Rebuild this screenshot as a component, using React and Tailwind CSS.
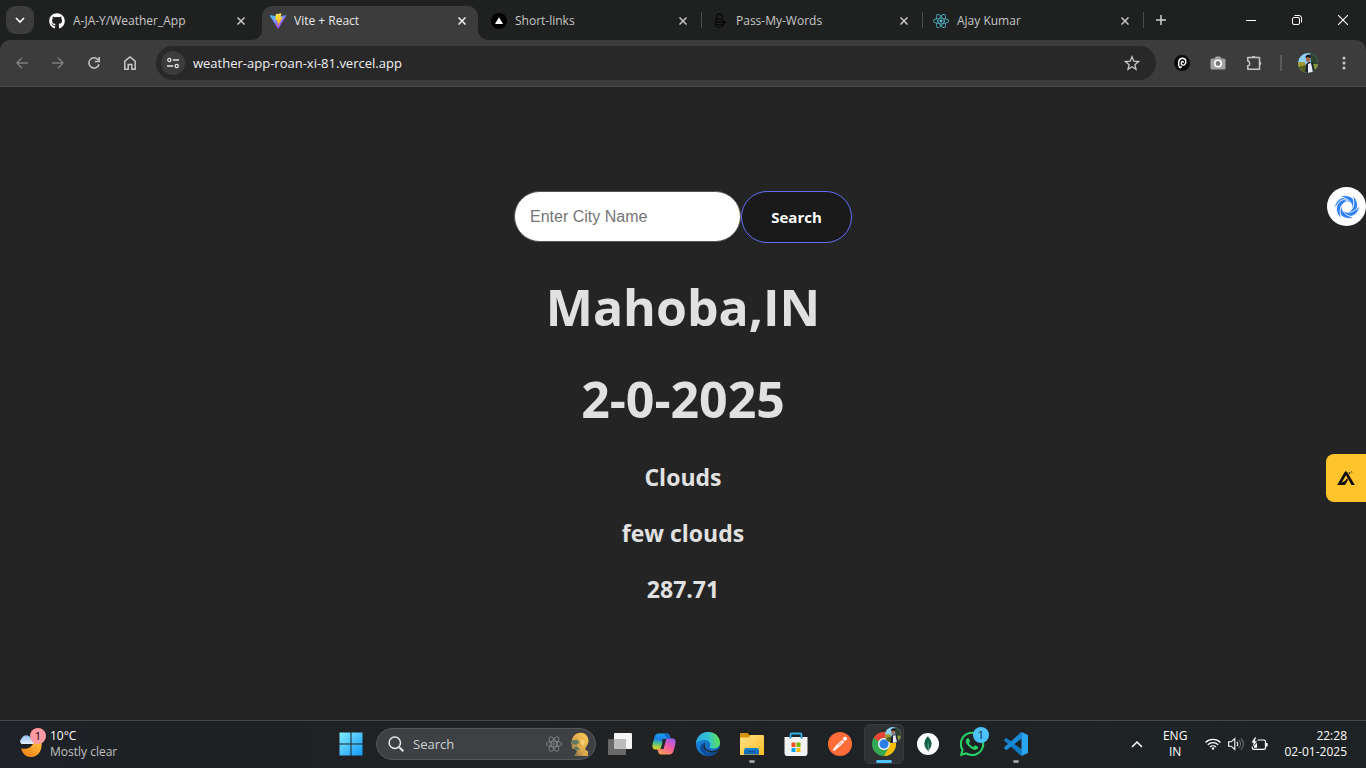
import React from "react";
import { FaGithub, FaWhatsapp, FaReact } from "react-icons/fa";
import { SiMongodb } from "react-icons/si";

function Vite() {
  return (
    <svg viewBox="0 0 32 32" className="size-4">
      <defs>
        <linearGradient id="viteA" x1="0" y1="0" x2=".7" y2="1">
          <stop offset="0" stopColor="#41d1ff" />
          <stop offset="1" stopColor="#bd34fe" />
        </linearGradient>
        <linearGradient id="viteB" x1=".4" y1="0" x2=".6" y2="1">
          <stop offset="0" stopColor="#ffea83" />
          <stop offset=".2" stopColor="#ffdd35" />
          <stop offset="1" stopColor="#ffa800" />
        </linearGradient>
      </defs>
      <path fill="url(#viteA)" d="M31.9 5.8 17 31.1c-.3.6-1.200.6-1.500 0L.1 5.800C-.3 5.100.3 4.300 1.100 4.400L16 7.100 30.900 4.400c.8-.1 1.400.7 1 1.400Z" />
      <path fill="url(#viteB)" d="M22.500.6 11.800 2.700c-.2 0-.3.2-.3.4L10.800 14c0 .3.2.5.5.4l3-.7c.3-.1.500.2.500.5l-.9 4.300c-.1.300.2.500.5.4l1.900-.6c.3-.1.600.2.500.5l-1.400 6.800c-.1.4.5.7.7.3l.2-.2 8.700-17.400c.1-.2-.1-.6-.5-.5l-3.100.6c-.3.100-.5-.2-.5-.5l2-6.900c.1-.300-.1-.500-.4-.4Z" />
    </svg>
  );
}

function VercelMark() {
  return (
    <svg viewBox="0 0 16 16" className="size-4">
      <circle cx="8" cy="8" r="8" fill="#000" />
      <path d="M8 4.200 12 11H4Z" fill="#fff" />
    </svg>
  );
}

function LockMark() {
  return (
    <svg viewBox="0 0 16 16" className="size-4" fill="none" stroke="#080808" strokeWidth="1.300">
      <path d="M4.500 6V4a3 3 0 0 1 6 0v2" />
      <circle cx="7.500" cy="10" r="4.300" />
      <path d="M4 9h9M5 11.500h6M11.500 7.500l2 1.800-2 1.800" />
    </svg>
  );
}

function Close({ label, bright }) {
  return (
    <button type="button" aria-label={label} className={bright ? "grid size-4 place-items-center text-[#f0f0f0]" : "grid size-4 place-items-center text-[#c7c7c7]"}>
      <svg viewBox="0 0 8 8" className="size-2" stroke="currentColor" strokeWidth="1.500">
        <path d="M.5.5l7 7M7.500.500l-7 7" />
      </svg>
    </button>
  );
}

const tabs = [
  { title: "A-JA-Y/Weather_App", icon: <FaGithub className="size-4 text-white" /> },
  { title: "Vite + React", icon: <Vite />, active: true },
  { title: "Short-links", icon: <VercelMark />, sep: true },
  { title: "Pass-My-Words", icon: <LockMark />, sep: true },
  { title: "Ajay Kumar", icon: <FaReact className="size-4 text-[#58c4dc]" />, sep: true },
];

function Tab({ tab }) {
  return (
    <div className="flex h-full w-[221px] min-w-0 shrink items-end">
      <div className={tab.active ? "relative flex h-[34px] min-w-0 flex-1 items-center rounded-t-[10px] bg-[#3c3c3c] px-2 pb-1 text-[#e8e8e8]" : "flex h-[34px] min-w-0 flex-1 items-center px-2 pb-1 text-[#c7c7c7]"}>
        {tab.active && (
          <>
            <svg viewBox="0 0 10 10" className="absolute bottom-0 -left-2.5 size-2.5">
              <path d="M10 0v10H0A10 10 0 0 0 10 0Z" fill="#3c3c3c" />
            </svg>
            <svg viewBox="0 0 10 10" className="absolute -right-2.5 bottom-0 size-2.5">
              <path d="M0 0v10h10A10 10 0 0 1 0 0Z" fill="#3c3c3c" />
            </svg>
          </>
        )}
        <button type="button" className="flex min-w-0 flex-1 items-center gap-2 text-left">
          <span className="shrink-0">{tab.icon}</span>
          <span className="truncate text-xs leading-4">{tab.title}</span>
        </button>
        <Close label={"Close " + tab.title} bright={tab.active} />
      </div>
      <div className="flex h-[34px] w-[5px] justify-center pt-1.5">
        {tab.sep && <div className="h-4 w-px bg-[#4a4c4b]" />}
      </div>
    </div>
  );
}

function TabStrip() {
  return (
    <header className="flex h-10 items-start bg-[#1f2120]">
      <button type="button" aria-label="Search tabs" className="mt-1.5 mr-[7px] ml-1.5 grid size-7 shrink-0 place-items-center rounded-[9px] bg-[#3c3c3c] text-white">
        <svg viewBox="0 0 10 10" className="size-2.5" fill="none" stroke="currentColor" strokeWidth="1.700">
          <path d="M1 3l4 4 4-4" />
        </svg>
      </button>
      <nav className="flex h-full min-w-0">
        {tabs.map((t) => (
          <Tab key={t.title} tab={t} />
        ))}
      </nav>
      <button type="button" aria-label="New tab" className="mt-1.5 ml-px grid size-7 shrink-0 place-items-center text-[#d0d0d0]">
        <svg viewBox="0 0 10 10" className="size-2.5" stroke="currentColor" strokeWidth="1.500">
          <path d="M5 0v10M0 5h10" />
        </svg>
      </button>
      <div className="ml-auto flex h-10 text-white">
        <button type="button" aria-label="Minimize" className="grid w-[46px] place-items-center">
          <svg viewBox="0 0 10 10" className="size-2.5" stroke="currentColor"><path d="M0 5.500h10" /></svg>
        </button>
        <button type="button" aria-label="Restore" className="grid w-[46px] place-items-center">
          <svg viewBox="0 0 10 10" className="size-2.5" fill="none" stroke="currentColor">
            <rect x=".5" y="2.500" width="7" height="7" rx="1.500" />
            <path d="M2.500.500H7A2.500 2.500 0 0 1 9.500 3v4.500" />
          </svg>
        </button>
        <button type="button" aria-label="Close window" className="grid w-[46px] place-items-center">
          <svg viewBox="0 0 10 10" className="size-2.5" stroke="currentColor" strokeWidth="1.100"><path d="M0 0l10 10M10 0L0 10" /></svg>
        </button>
      </div>
    </header>
  );
}

function ToolButton({ label, children, dim }) {
  return (
    <button type="button" aria-label={label} className={dim ? "grid h-9 w-9 shrink-0 place-items-center text-[#7e7e7e]" : "grid h-9 w-9 shrink-0 place-items-center text-[#c7c7c7]"}>
      {children}
    </button>
  );
}

function Avatar({ className }) {
  return (
    <svg viewBox="0 0 20 20" className={className}>
      <defs><clipPath id="avatarClip"><circle cx="10" cy="10" r="10" /></clipPath></defs>
      <g clipPath="url(#avatarClip)">
        <rect width="20" height="20" fill="#8fd0f5" />
        <path d="M0 9l7 0 1 11H0Z" fill="#a39a31" />
        <path d="M0 14l8-2v8H0Z" fill="#54611e" />
        <path d="M12 0h8v20h-6Z" fill="#2c4430" />
        <path d="M15 11h5v5h-5Z" fill="#8a9238" />
        <path d="M7 20l1-9 3-2 4 1 2 10Z" fill="#1b2230" />
        <path d="M10 20v-9l3-1 2 9Z" fill="#e4e9f2" />
        <path d="M8 4c0-2 4-3 4.500 0l-.5 4-2 1.500L8 8Z" fill="#a0684e" />
        <path d="M7.500 5C7 1 13 0 13 4l-1 1-2-1Z" fill="#151515" />
      </g>
    </svg>
  );
}

function Toolbar() {
  return (
    <div className="bg-[#1f2120]">
      <div className="flex h-[47px] items-center rounded-t-[10px] border-b border-[#4b4b4b] bg-[#3c3c3c] px-1">
        <ToolButton label="Back" dim>
          <svg viewBox="0 0 12 12" className="size-3" fill="none" stroke="currentColor" strokeWidth="1.400"><path d="M12 6H1M6 .7.900 6 6 11.300" /></svg>
        </ToolButton>
        <ToolButton label="Forward" dim>
          <svg viewBox="0 0 12 12" className="size-3" fill="none" stroke="currentColor" strokeWidth="1.400"><path d="M0 6h11M6 .7 11.100 6 6 11.300" /></svg>
        </ToolButton>
        <ToolButton label="Reload">
          <svg viewBox="0 0 12 12" className="size-3" fill="none" stroke="currentColor" strokeWidth="1.500"><path d="M10.200 3A5.100 5.100 0 1 0 11 7.200M11.200 0v4.400H6.800" /></svg>
        </ToolButton>
        <ToolButton label="Home">
          <svg viewBox="0 0 12 14" className="h-3.5 w-3" fill="none" stroke="currentColor" strokeWidth="1.500"><path d="M.8 13.200V5.200L6 1l5.200 4.200v8H7.800V8.500H4.200v4.700Z" /></svg>
        </ToolButton>
        <div className="mx-2 flex h-[34px] min-w-0 flex-1 items-center rounded-full bg-[#282828] pr-4 pl-[5px]">
          <button type="button" aria-label="Site information" className="grid size-6 shrink-0 place-items-center rounded-full bg-[#3c3c3c] text-[#e3e3e3]">
            <svg viewBox="0 0 12 12" className="size-3" fill="none" stroke="currentColor" strokeWidth="1.300">
              <circle cx="2.300" cy="3" r="1.600" /><path d="M5.800 3H12M0 9h6.200" /><circle cx="9.700" cy="9" r="1.600" />
            </svg>
          </button>
          <input aria-label="Address" defaultValue="weather-app-roan-xi-81.vercel.app" className="ml-2 min-w-0 flex-1 bg-transparent text-[13px] leading-5 text-[#f1f1f1] outline-none" />
          <button type="button" aria-label="Bookmark this tab" className="text-[#c7c7c7]">
            <svg viewBox="0 0 16 16" className="size-4" fill="none" stroke="currentColor" strokeWidth="1.300"><path d="M8 1.800l1.800 4.400 4.700.4-3.600 3.100 1.100 4.600L8 11.800l-4 2.500 1.100-4.600-3.600-3.100 4.700-.4Z" /></svg>
          </button>
        </div>
        <ToolButton label="Password extension">
          <svg viewBox="0 0 16 16" className="size-4" fill="none">
            <circle cx="8" cy="8" r="8" fill="#0b0b0b" />
            <path d="M5.800 13C3.500 8.500 4.500 3.300 8.500 3.300c3.500 0 4.300 4 2.200 6.100-1.700 1.500-4 .3-3.300-1.900.5-1.400 2.100-1.300 1.900.2M6.200 13l1.400-1.800" stroke="#fff" strokeWidth="1.400" />
          </svg>
        </ToolButton>
        <ToolButton label="Screenshot extension">
          <svg viewBox="0 0 16 14" className="h-3.5 w-4">
            <path d="M2 2.500h2.500L6 .500h4l1.500 2H14A1.500 1.500 0 0 1 15.500 4v8A1.500 1.500 0 0 1 14 13.500H2A1.500 1.500 0 0 1 .500 12V4A1.500 1.500 0 0 1 2 2.500Z" fill="#a2a2a2" />
            <circle cx="8" cy="7.500" r="3.200" fill="#777" stroke="#fff" strokeWidth="1.600" />
          </svg>
        </ToolButton>
        <ToolButton label="Extensions">
          <svg viewBox="0 0 16 16" className="size-4" fill="none" stroke="currentColor" strokeWidth="1.500">
            <path d="M1.800 2.500H13.500V14.200H1.800v-3.500c2.500 0 2.500-4.600 0-4.600Z" strokeLinejoin="round" />
            <path d="M5.800 2.500a1.800 1.800 0 0 1 3.600 0ZM13.500 6.600a1.800 1.800 0 0 1 0 3.600Z" fill="currentColor" stroke="none" />
          </svg>
        </ToolButton>
        <div className="mx-2 h-4 w-0.5 bg-[#5a5a5a]" />
        <ToolButton label="Profile"><Avatar className="size-5" /></ToolButton>
        <ToolButton label="Menu">
          <svg viewBox="0 0 4 14" className="h-3.5 w-1" fill="currentColor"><circle cx="2" cy="2" r="1.500" /><circle cx="2" cy="7" r="1.500" /><circle cx="2" cy="12" r="1.500" /></svg>
        </ToolButton>
      </div>
    </div>
  );
}

function Weather() {
  return (
    <main className="relative flex flex-1 flex-col items-center bg-[#242424] pt-[104px] text-center font-bold text-[#e1e1e1]">
      <form className="flex items-start" onSubmit={(e) => e.preventDefault()}>
        <input aria-label="City name" placeholder="Enter City Name" className="h-[51px] w-[227px] rounded-full border border-[#555] bg-white px-[15px] font-['Liberation_Sans',sans-serif] text-base font-normal text-black outline-none placeholder:text-[#757575]" />
        <button className="h-[52px] w-[111px] rounded-[26px] border border-[#646cff] bg-[#1a1a1a] text-[15px] font-bold text-white">Search</button>
      </form>
      <h1 className="mt-9 text-[50px] leading-14">Mahoba,IN</h1>
      <h1 className="mt-9 text-[50px] leading-14">2-0-2025</h1>
      <div className="mt-8 flex flex-col gap-5 text-[23px] leading-9">
        <h2>Clouds</h2>
        <h2>few clouds</h2>
        <h2>287.71</h2>
      </div>
      <button type="button" aria-label="Assistant" className="absolute top-[100px] right-0 grid size-[39px] place-items-center rounded-full bg-white">
        <svg viewBox="-14 -14 28 28" className="size-7" fill="none" stroke="#2f80f6" strokeLinecap="round">
          {[0, 60, 120, 180, 240, 300].map((a) => (
            <path key={a} transform={"rotate(" + a + ")"} d="M-12.500 1C-12-7-4-12 2.500-8.500C5-7 6-5 5.500-2C1-7-6-7-12.500 1Z" fill="#2f80f6" stroke="#fff" strokeWidth=".8" />
          ))}
        </svg>
      </button>
      <button type="button" aria-label="Open side panel" className="absolute top-[367px] right-0 grid h-12 w-10 place-items-center rounded-l-lg bg-[#ffc32b]">
        <svg viewBox="0 0 18 16" className="h-4 w-[18px]" fill="#0a0a0a">
          <path d="M8 1.500h1.800L17.800 15h-3.300L9 5.200 4.500 12.800 8.500 10.500 10 8.300l1 1.700L8 15H.2Z" />
          <path d="M11.500 2l2 .8-.8 1.700ZM13.800 1.500h1.400v1.400Z" />
        </svg>
      </button>
    </main>
  );
}

function WeatherIcon() {
  return (
    <svg viewBox="0 0 28 28" className="size-7">
      <defs>
        <linearGradient id="moon" x1="1" y1="0" x2="0" y2="1"><stop offset="0" stopColor="#ffc83d" /><stop offset="1" stopColor="#f07a18" /></linearGradient>
        <linearGradient id="cloud" x1="0" y1="0" x2="0" y2="1"><stop offset="0" stopColor="#8fbdf0" /><stop offset="1" stopColor="#e4f0ff" /></linearGradient>
      </defs>
      <path d="M3 18.500c7 1.500 13-2 13-9.500h7c2.500 10-2 18-10 18-5 0-8.500-3.500-10-8.500Z" fill="url(#moon)" />
      <path d="M3.500 14a3.300 3.300 0 0 1 .2-5.500c1.500-4 7-4.500 8.800-.7 2.500 0 4 2.500 3 6.200Z" fill="url(#cloud)" />
    </svg>
  );
}

function WindowsLogo() {
  return (
    <svg viewBox="0 0 24 24" className="size-6">
      <defs><linearGradient id="win" x1="0" y1="0" x2="1" y2="1"><stop offset="0" stopColor="#82edff" /><stop offset="1" stopColor="#1299f8" /></linearGradient></defs>
      <path fill="url(#win)" d="M.5.5h11v11H.500ZM12.500.500h11v11h-11ZM.500 12.500h11v11H.500ZM12.500 12.500h11v11h-11Z" />
    </svg>
  );
}

function SearchArt() {
  return (
    <svg viewBox="0 0 46 26" className="h-[26px] w-[46px] shrink-0">
      <defs><linearGradient id="head" x1="1" y1="0" x2="0" y2="1"><stop offset="0" stopColor="#ffcf59" /><stop offset=".6" stopColor="#d8a44a" /><stop offset="1" stopColor="#5e604e" /></linearGradient></defs>
      <g fill="none" stroke="#7e8082">
        <ellipse cx="9" cy="13" rx="8" ry="2.800" transform="rotate(0 9 13)" />
        <ellipse cx="9" cy="13" rx="8" ry="2.800" transform="rotate(60 9 13)" />
        <ellipse cx="9" cy="13" rx="8" ry="2.800" transform="rotate(120 9 13)" />
        <circle cx="9" cy="13" r="1" />
      </g>
      <path d="M27.500 7C30 1 39 0 42 5c2.500 4 1.500 8-1 11l-1 2.500 3 2V25H29l3-4.500-2.500-2.500h-2l-1-2 .5-1.500-1-2Z" fill="url(#head)" />
      <path d="M27 9.500l5-1 2.500 3-3 2.500-4.500-1ZM31 15l4 3-3.500 1.500-2.500-2Z" fill="#456f69" opacity=".8" />
      <path d="M36 8l4 2-1.500 5-3-3Z" fill="#ffe18d" opacity=".6" />
    </svg>
  );
}

function TaskView() {
  return (
    <svg viewBox="0 0 24 24" className="size-6">
      <rect x="6" y="1" width="18" height="16" rx="1" fill="#f4f4f4" />
      <rect x="0" y="7" width="18" height="16" rx="1" fill="#7c7c7c" fillOpacity=".8" />
      <path d="M6 7h12v10H6Z" fill="#bcbcbc" />
    </svg>
  );
}

function Copilot() {
  return (
    <svg viewBox="0 0 24 24" className="size-6">
      <defs>
        <linearGradient id="copA" x1=".3" y1="0" x2=".2" y2="1"><stop offset="0" stopColor="#1ba5f5" /><stop offset=".35" stopColor="#1b7de8" /><stop offset=".6" stopColor="#4cc08a" /><stop offset="1" stopColor="#f4d317" /></linearGradient>
        <linearGradient id="copB" x1=".8" y1="0" x2=".3" y2="1"><stop offset="0" stopColor="#a15bf0" /><stop offset=".5" stopColor="#ef5aa0" /><stop offset="1" stopColor="#ff9b57" /></linearGradient>
      </defs>
      <path d="M6.500 1.500h8.500c2 0 2.500 1.500 3 3l.8 2.500H17c-2 0-3 1-3.500 3l-1.500 5c-.6 2-2 2.500-3.500 2.500H3.500C.2 17.500 0 14 .8 11l1.700-6C3.200 2.700 4.500 1.500 6.500 1.500Z" fill="url(#copA)" />
      <path d="M17.500 22.500H9c-2 0-2.500-1.500-3-3L5.200 17H7c2 0 3-1 3.500-3l1.500-5c.6-2 2-2.500 3.500-2.500h5c3.300 0 3.500 3.500 2.700 6.500l-1.700 6c-.700 2.300-2 3.500-4 3.500Z" fill="url(#copB)" />
      <path d="M10.500 7h4l-1.200 3.500-1.800 6.500H8.500l1.600-5Z" fill="#24282c" />
      <path d="M14 1.500c2.500 0 3.200 1.500 4.500 5H15L12 2Z" fill="#1668c8" />
    </svg>
  );
}

function Edge() {
  return (
    <svg viewBox="0 0 24 24" className="size-6">
      <defs>
        <linearGradient id="edgeA" x1="0" y1=".4" x2="1" y2=".3"><stop offset="0" stopColor="#2aa6e4" /><stop offset=".5" stopColor="#31c4d4" /><stop offset="1" stopColor="#63e34b" /></linearGradient>
        <linearGradient id="edgeB" x1="0" y1="0" x2="1" y2="1"><stop offset="0" stopColor="#1b8ce0" /><stop offset="1" stopColor="#0f5bb5" /></linearGradient>
      </defs>
      <circle cx="12" cy="12" r="12" fill="url(#edgeB)" />
      <path d="M0 11C.8 4.500 5.800 0 12 0c7 0 12 4.800 12 10.500 0 4-3 6.200-6.500 6.200-3 0-4.500-1.200-3.700-2.400 1.700-2.700-.8-6.300-4.800-6.300C5 8 1.500 9.500 0 11Z" fill="url(#edgeA)" />
      <path d="M9 10.500c-2.500 5 .5 10.800 6.500 10.800 2.500 0 4.500-.8 7-2.500C18 26 8.500 25 5 18.500c-1.500-3 .2-7 4-8Z" fill="#0c4c96" />
      <path d="M9.300 10.200c-2.100 4.500 2 9.300 7.700 8.800 2.500-.2 4-.9 6-2.200l-.7 1.800c-3 2.300-7 3-10.300 1.200C7.500 17.500 6.500 12.500 9.300 10.200Z" fill="#24282c" />
    </svg>
  );
}

function Explorer() {
  return (
    <svg viewBox="0 0 24 24" className="size-6">
      <defs>
        <linearGradient id="folder" x1="0" y1="0" x2="1" y2="1"><stop offset="0" stopColor="#ffe38a" /><stop offset="1" stopColor="#f8bd23" /></linearGradient>
        <linearGradient id="folderBlue" x1="0" y1="0" x2="0" y2="1"><stop offset="0" stopColor="#1583d8" /><stop offset="1" stopColor="#1263ad" /></linearGradient>
      </defs>
      <path d="M0 2.200C0 1.500.5 1 1.200 1H7.500l2 2H15v5H0Z" fill="#d79406" />
      <path d="M0 5.500h8.500L11 3h11.800c.7 0 1.200.5 1.200 1.200V23H0Z" fill="url(#folder)" />
      <path d="M4 22.500v-4c0-1.400 1-2.500 2.500-2.500h10c1.500 0 2.500 1.100 2.500 2.500v4Z" fill="url(#folderBlue)" />
      <path d="M8 19.500h7" stroke="#0d4f91" strokeWidth="1.200" />
    </svg>
  );
}

function Store() {
  return (
    <svg viewBox="0 0 24 24" className="size-6">
      <path d="M6.500 6V2.500a1 1 0 0 1 1-1h9a1 1 0 0 1 1 1V6" fill="none" stroke="#2cb3ee" strokeWidth="1.800" />
      <path d="M.5 5h23v15.500A3.300 3.300 0 0 1 20.200 24H3.800A3.300 3.300 0 0 1 .500 20.500Z" fill="#f2f2f2" />
      <path d="M6.500 5v1.500M17.500 5v1.500" stroke="#1c86c4" strokeWidth="1.800" />
      <path d="M7.500 10.500h4V15h-4Z" fill="#f25022" /><path d="M12.500 10.500h4V15h-4Z" fill="#7fba00" />
      <path d="M7.500 16h4v4h-4Z" fill="#00a4ef" /><path d="M12.500 16h4v4h-4Z" fill="#ffb900" />
    </svg>
  );
}

function Postman() {
  return (
    <svg viewBox="0 0 24 24" className="size-6">
      <circle cx="12" cy="12" r="12" fill="#ff6c37" />
      <circle cx="17" cy="6.800" r="2" fill="#fff" />
      <path d="M14.500 8.300 16.300 10 9.500 16.200l-2.300-.3Z" fill="#fff" />
      <path d="M14 8.800 7.500 15l-2.300 3.500L8.700 16.500" fill="none" stroke="#fff" strokeWidth="1.200" />
      <path d="m10 13.500 4-3.700" stroke="#ff6c37" strokeWidth=".7" />
    </svg>
  );
}

function Chrome() {
  return (
    <svg viewBox="0 0 24 24" className="size-6">
      <circle cx="12" cy="12" r="12" fill="#34a853" />
      <path d="M12 0a12 12 0 0 1 10.400 6H12a6 6 0 0 0-5.200 3L1.600 6A12 12 0 0 1 12 0Z" fill="#ea4335" />
      <path d="M22.400 6A12 12 0 0 1 12 24l5.200-9A6 6 0 0 0 17.200 9L12 6Z" fill="#fbbc05" />
      <circle cx="12" cy="12" r="6" fill="#fff" />
      <circle cx="12" cy="12" r="4.700" fill="#2f7de9" />
    </svg>
  );
}

function Mongo() {
  return (
    <span className="grid size-[22px] place-items-center rounded-full bg-white">
      <SiMongodb className="size-4 text-[#126149]" />
    </span>
  );
}

function VSCode() {
  return (
    <svg viewBox="0 0 24 24" className="size-6">
      <path d="M17.500 17.300 2.600 6 .3 7.600c-.4.3-.4.8 0 1.200L17 23.800l.500.2Z" fill="#0f7ac6" />
      <path d="M17.500 6.700 2.600 18 .3 16.400c-.4-.3-.4-.8 0-1.200L17 .2l.500-.2Z" fill="#178bd8" />
      <path d="M17.500 0 24 3v18l-6.500 3V0Z" fill="#2ba6f3" />
    </svg>
  );
}

const apps = [
  { name: "Task View", icon: <TaskView /> },
  { name: "Copilot", icon: <Copilot /> },
  { name: "Edge", icon: <Edge /> },
  { name: "File Explorer", icon: <Explorer />, open: true },
  { name: "Microsoft Store", icon: <Store /> },
  { name: "Postman", icon: <Postman /> },
  { name: "Chrome", icon: <Chrome />, active: true },
  { name: "MongoDB Compass", icon: <Mongo /> },
  { name: "WhatsApp", icon: <FaWhatsapp className="size-7 text-[#25d366]" />, badge: "1" },
  { name: "VS Code", icon: <VSCode />, open: true },
];

function AppButton({ app }) {
  return (
    <div className="flex w-11 justify-center">
      <button type="button" aria-label={app.name} className={app.active ? "relative grid size-10 place-items-center rounded-[5px] border border-[#383a3c] bg-[#303133]" : "relative grid size-10 place-items-center"}>
        {app.icon}
        {app.active && <Avatar className="absolute top-0.5 right-0.5 size-4" />}
        {app.active && <span className="absolute bottom-0 left-1/2 h-[3px] w-4 -translate-x-1/2 rounded-full bg-[#4cc2ff]" />}
        {app.open && <span className="absolute bottom-px left-1/2 h-[3px] w-1.5 -translate-x-1/2 rounded-full bg-[#9a9a9a]" />}
        {app.badge && <span className="absolute top-[3px] right-[3px] grid size-4 place-items-center rounded-full bg-[#4cc2ff] text-[11px] leading-4 text-[#10222c]">{app.badge}</span>}
      </button>
    </div>
  );
}

function Taskbar() {
  return (
    <footer className="grid h-12 grid-cols-[1fr_auto_1fr] items-center border-t border-[#46484a] bg-linear-to-r from-[#1e2125] via-[#202224] to-[#1d2325] pb-0.5 text-white">
      <button type="button" className="relative flex items-center gap-1 justify-self-start pl-[18px] text-left">
        <WeatherIcon />
        <span className="absolute top-0 left-[30px] grid size-4 place-items-center rounded-full bg-[#ff99a4] text-[11px] leading-4 text-black">1</span>
        <span className="flex flex-col text-xs leading-4">
          <span>10°C</span>
          <span className="text-[#c0c1c2]">Mostly clear</span>
        </span>
      </button>
      <div className="flex items-center pl-px">
        <button type="button" aria-label="Start" className="grid h-10 w-11 place-items-center"><WindowsLogo /></button>
        <label className="mr-0.5 ml-[3px] flex h-8 w-[220px] items-center rounded-full border border-[#55585b] bg-[#3d4144] pr-1 pl-[11px]">
          <svg viewBox="0 0 16 16" className="size-4 shrink-0" fill="none" stroke="#e8e8e8" strokeWidth="1.500"><circle cx="6.800" cy="6.800" r="5.700" /><path d="m11 11 4.300 4.300" strokeWidth="2" /></svg>
          <input aria-label="Search Windows" placeholder="Search" className="ml-[9px] min-w-0 flex-1 bg-transparent text-[13px] leading-5 text-white outline-none placeholder:text-[#d0d1d2]" />
          <SearchArt />
        </label>
        {apps.map((a) => (
          <AppButton key={a.name} app={a} />
        ))}
      </div>
      <div className="flex items-center justify-self-end pr-[19px] text-xs leading-4">
        <button type="button" aria-label="Show hidden icons" className="mr-5">
          <svg viewBox="0 0 12 8" className="h-2 w-3" fill="none" stroke="currentColor" strokeWidth="1.500"><path d="m1 7 5-5 5 5" /></svg>
        </button>
        <button type="button" className="mr-[18px] flex flex-col items-center"><span>ENG</span><span>IN</span></button>
        <button type="button" aria-label="Network, sound and battery" className="mr-4 flex items-center gap-[7px]">
          <svg viewBox="0 0 16 12" className="h-3 w-4" fill="none" stroke="currentColor" strokeWidth="1.200">
            <path d="M.5 4.500a10.500 10.500 0 0 1 15 0M2.800 6.800a7.400 7.400 0 0 1 10.400 0M5 9a4.200 4.200 0 0 1 6 0" /><circle cx="8" cy="10.500" r="1.200" fill="currentColor" stroke="none" />
          </svg>
          <svg viewBox="0 0 16 14" className="h-3.5 w-4" fill="none" stroke="currentColor" strokeWidth="1.100">
            <path d="M.6 4.800h2.600L6.800 1.500v11L3.200 9.200H.600ZM8.800 4.800a3 3 0 0 1 0 4.400" /><path d="M10.900 3a5.500 5.500 0 0 1 0 8M13 1.300a8 8 0 0 1 0 11.400" stroke="#6a6c6e" />
          </svg>
          <svg viewBox="0 0 17 14" className="h-3.5 w-[17px]" fill="none" stroke="currentColor" strokeWidth="1.200">
            <path d="M6.500 3h6.300A1.700 1.700 0 0 1 14.500 4.700v6A1.700 1.700 0 0 1 12.800 12.400H3A1.700 1.700 0 0 1 1.300 10.700V9.500" /><path d="M15.800 6v3.400" strokeWidth="1.600" />
            <path d="M4 .3.500 5.600h2.200L1.800 9.500 6 4.300H3.800L5 .3Z" fill="currentColor" stroke="none" /><path d="M3 10.800V9l3-3.300v5.100Z" fill="currentColor" stroke="none" />
          </svg>
        </button>
        <button type="button" className="flex flex-col items-end"><span>22:28</span><span>02-01-2025</span></button>
      </div>
    </footer>
  );
}

export default function App() {
  return (
    <div className="flex min-h-screen flex-col bg-[#242424] font-['Open_Sans','Noto_Sans',sans-serif]">
      <TabStrip />
      <Toolbar />
      <Weather />
      <Taskbar />
    </div>
  );
}
